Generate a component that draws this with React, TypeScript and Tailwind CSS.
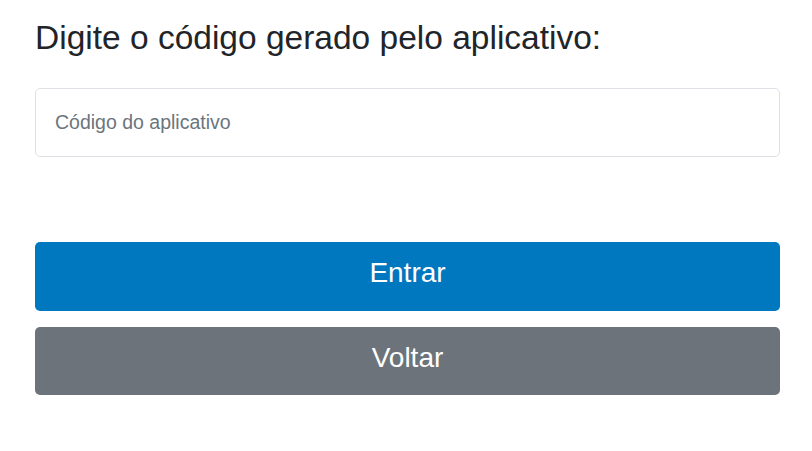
import { useState } from "react";

export default function App() {
    const [code, setCode] = useState("");

    return (
        <div className="min-h-screen bg-white font-['Liberation_Sans',Arial,sans-serif] text-[#212529]">
            <div className="ml-[35px] w-[745px] pt-[18px]">
                <h2 className="text-[33.5px] leading-[40px] font-normal mb-[30px]">
                    Digite o código gerado pelo aplicativo:
                </h2>
                <input
                    type="text"
                    placeholder="Código do aplicativo"
                    value={code}
                    onChange={(e) => setCode(e.target.value)}
                    className="block w-full h-[69px] pl-[19px] pr-4 text-[19.5px] text-[#212529] placeholder:text-[#6c757d] bg-white border border-[#dee2e6] rounded-[5px] outline-none"
                />
                <div className="flex flex-col gap-[16px] mt-[85px]">
                    <button
                        type="button"
                        className="flex items-center justify-center h-[69px] pb-[7px] rounded-[5px] bg-[#0078c0] text-white text-[28px] cursor-pointer"
                    >
                        Entrar
                    </button>
                    <button
                        type="button"
                        className="flex items-center justify-center h-[68px] pb-[6px] rounded-[5px] bg-[#6c737b] text-white text-[28px] cursor-pointer"
                    >
                        Voltar
                    </button>
                </div>
            </div>
        </div>
    );
}
